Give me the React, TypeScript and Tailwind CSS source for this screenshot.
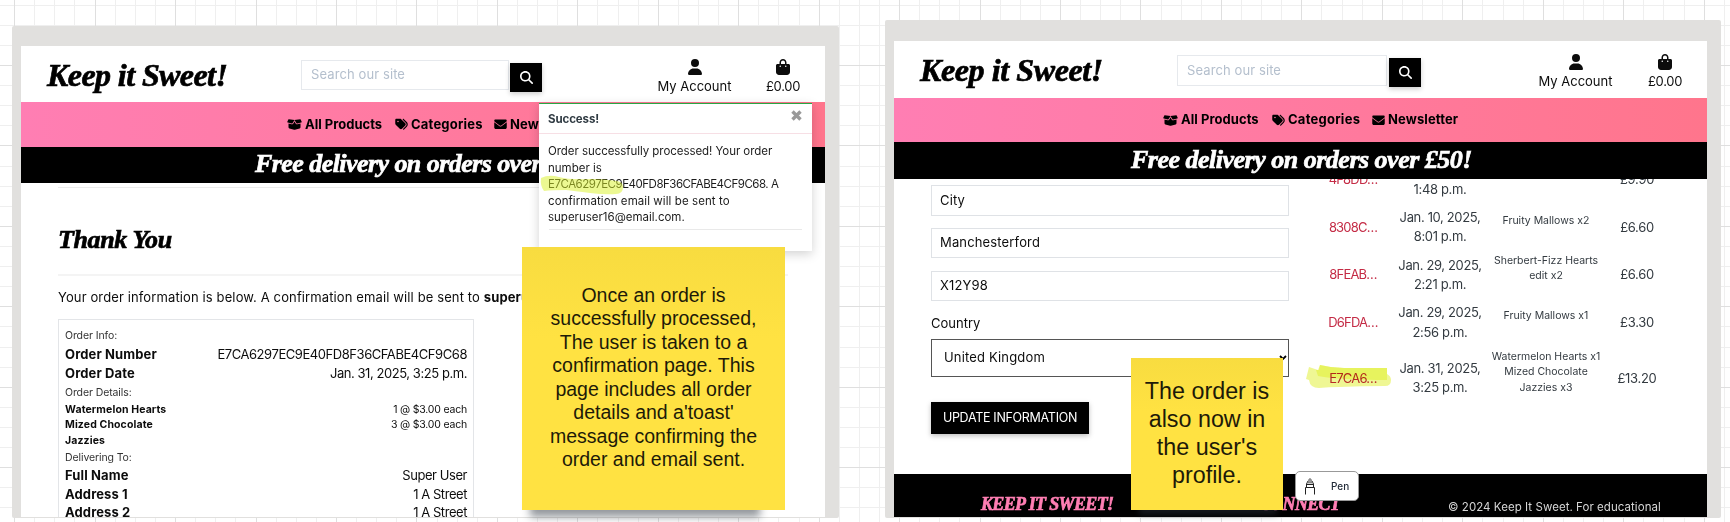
import type { ReactNode } from "react";
import {
  FaBagShopping,
  FaBoxOpen,
  FaEnvelope,
  FaMagnifyingGlass,
  FaTags,
  FaUser,
} from "react-icons/fa6";

const script = "font-['Liberation_Serif',serif] font-bold italic [-webkit-text-stroke:0.7px]";

function CanvasGrid() {
  const step = 20.113;
  const cols = Array.from({ length: 87 }, (_, i) => i - 1);
  const rows = Array.from({ length: 26 }, (_, i) => i);
  const ink = (i: number) => (i % 4 === 0 ? "#dfdfdf" : "#efefef");
  return (
    <svg className="absolute inset-0" width="1730" height="522" shapeRendering="crispEdges">
      {cols.map((i) => i % 4 !== 0 && <rect key={"c" + i} x={Math.round(14.15 + i * step)} y="0" width="1" height="522" fill={ink(i)} />)}
      {rows.map((i) => <rect key={"r" + i} x="0" y={Math.floor(5.1 + i * step)} width="1730" height="1" fill={ink(i + 1)} />)}
      {cols.map((i) => i % 4 === 0 && <rect key={"m" + i} x={Math.round(14.15 + i * step)} y="0" width="1" height="522" fill={ink(i)} />)}
    </svg>
  );
}

function SiteHeader({ wide = false }: { wide?: boolean }) {
  return (
    <div className="shrink-0">
      <header className={wide ? "flex h-[57px] items-start bg-white" : "flex h-14 items-start bg-white"}>
        <div className={`${script} ml-[26px] mt-[10px] w-[254px] whitespace-nowrap text-[32px] leading-[38px] text-black ${wide ? "tracking-[-0.4px]" : "tracking-[-0.58px]"}`}>
          Keep it Sweet!
        </div>
        <div className={wide ? "ml-[3px] mt-[14px] flex h-[31px] w-[210px] items-center border border-[#e6e9ed] pl-[9px]" : "mt-[14px] flex h-[30px] w-[208px] items-center border border-[#e6e9ed] pl-[9px]"}>
          <span className="text-[13px] tracking-[0.1px] text-[#b4bfcd]">Search our site</span>
        </div>
        <div className={`flex h-[29px] w-8 items-center justify-center bg-black text-white shadow-[0_2px_5px_rgba(0,0,0,0.2)] ${wide ? "ml-[2px] mt-[17px]" : "ml-px mt-[17px]"}`}>
          <FaMagnifyingGlass size={13} />
        </div>
        <div className={wide ? "ml-[112px] mt-[13px] flex w-[85px] flex-col items-center" : "ml-[110px] mt-[13px] flex w-[85px] flex-col items-center"}>
          <FaUser size={16} />
          <span className="mt-[2px] text-[13px] leading-[18px]">My Account</span>
        </div>
        <div className={wide ? "ml-[22px] mt-[13px] flex w-[50px] flex-col items-center" : "ml-[21px] mt-[13px] flex w-[50px] flex-col items-center"}>
          <FaBagShopping size={16} />
          <span className="mt-[2px] text-[13px] leading-[18px] tracking-[-0.3px]">£0.00</span>
        </div>
      </header>
      <nav className={`flex items-center bg-linear-to-r from-[#ff7eb3] to-[#ff758c] text-[13px] font-bold text-black ${wide ? "h-11 pl-[269px]" : "h-[45px] pl-[266px]"}`}>
        <span className={`flex items-center gap-[3px] ${wide ? "w-[109px] tracking-[0.05px]" : "w-[108px]"}`}>
          <FaBoxOpen size={15} className="w-[15px]" />
          All Products
        </span>
        <span className={`flex items-center gap-[3px] ${wide ? "w-[100px] tracking-[0.25px]" : "w-[99px] tracking-[0.2px]"}`}>
          <FaTags size={12.5} className="w-[13px]" />
          Categories
        </span>
        <span className="flex items-center gap-[3px] tracking-[0.12px]">
          <FaEnvelope size={12.5} className="w-[13px]" />
          Newsletter
        </span>
      </nav>
      <div className={`${script} flex items-center whitespace-nowrap bg-black pb-[2px] text-[26px] leading-none text-white ${wide ? "h-[37px] pl-[237px] tracking-[-0.5px]" : "h-9 pl-[234px] tracking-[-0.56px]"}`}>
        Free delivery on orders over £50!
      </div>
    </div>
  );
}

function Pair({ label, value, small = false, className }: { label: string; value?: string; small?: boolean; className: string }) {
  return (
    <div className={`flex shrink-0 items-center justify-between whitespace-nowrap ${small ? "text-[10.5px]" : "text-[13px]"} ${className}`}>
      <span className="font-bold tracking-[0.12px]">{label}</span>
      <span className={small ? "tracking-[-0.2px]" : "tracking-[-0.44px]"}>{value}</span>
    </div>
  );
}

function Caption({ children, className }: { children: ReactNode; className: string }) {
  return <div className={`flex shrink-0 items-center text-[10.5px] tracking-[-0.1px] text-[#333] ${className}`}>{children}</div>;
}

function ConfirmationPage() {
  return (
    <div className="absolute left-3 top-[26px] h-[492px] w-[827px] rounded-xs bg-[#e1e0de] pb-[1.5px] pl-[9px] pr-[14px] pt-5">
      <div className="flex h-full flex-col overflow-hidden bg-white">
        <SiteHeader />
        <div className="flex min-h-0 flex-1 flex-col pl-[37px] pr-[37px]">
          <div className="mt-1 h-px shrink-0 bg-[#ebebeb]" />
          <div className={`${script} mt-[37px] h-[32px] shrink-0 text-[26px] leading-[30px] tracking-[-0.4px] text-black`}>Thank You</div>
          <div className="mt-[17px] h-[2px] shrink-0 bg-[#f4f4f4]" />
          <p className="mt-[11px] h-[20px] shrink-0 whitespace-nowrap text-[13px] leading-[20px] tracking-[0.12px]">
            Your order information is below. A confirmation email will be sent to{" "}
            <b>superuser16@email.com</b>.
          </p>
          <div className="mt-3 flex min-h-0 w-[416px] flex-1 flex-col overflow-hidden border border-b-0 border-[#e3e5e8] px-[6px] pt-[6px]">
            <Caption className="h-5">Order Info:</Caption>
            <Pair className="h-[18px]" label="Order Number" value="E7CA6297EC9E40FD8F36CFABE4CF9C68" />
            <Pair className="h-[19px]" label="Order Date" value="Jan. 31, 2025, 3:25 p.m." />
            <Caption className="h-[20px]">Order Details:</Caption>
            <Pair small className="h-[14px]" label="Watermelon Hearts" value="1 @ $3.00 each" />
            <Pair small className="h-[16px]" label="Mized Chocolate" value="3 @ $3.00 each" />
            <Pair small className="h-[15px]" label="Jazzies" />
            <Caption className="h-[19px]">Delivering To:</Caption>
            <Pair className="h-[18px]" label="Full Name" value="Super User" />
            <Pair className="h-[19px]" label="Address 1" value="1 A Street" />
            <Pair className="h-[18px]" label="Address 2" value="1 A Street" />
          </div>
        </div>
      </div>
      <Toast />
    </div>
  );
}

function Toast() {
  return (
    <div className="absolute left-[527px] top-[77px] h-[148px] w-[273px] border-t border-[#28a745] bg-white shadow-[0_3px_10px_rgba(0,0,0,0.18)]">
      <div className="flex h-[30px] items-start justify-between border-b border-[#f7dfe5] pl-[9px] pr-[10px]">
        <span className="mt-[7px] text-[11.5px] font-bold leading-4 tracking-[-0.1px] text-[#2f3a42]">Success!</span>
        <svg className="mt-[6px]" width="11" height="11" viewBox="0 0 11 11" stroke="#999" strokeWidth="3.4">
          <path d="M1.500 1.500l8 8M9.500 1.500l-8 8" />
        </svg>
      </div>
      <div className="mx-[10px] -ml-0 whitespace-nowrap pl-[9px] pt-[9px] text-[11.5px] leading-[16.6px] text-[#1c1c1c]">
        <div className="tracking-[-0.06px]">Order successfully processed! Your order</div>
        <div>number is</div>
        <div className="tracking-[-0.49px]">E7CA6297EC9E40FD8F36CFABE4CF9C68. A</div>
        <div className="tracking-[0.08px]">confirmation email will be sent to</div>
        <div>superuser16@email.com.</div>
      </div>
      <div className="mx-[10px] mt-[3px] h-px bg-[#e9e9e9]" />
      <svg className="absolute left-0 top-[70px]" width="90" height="22" viewBox="0 0 90 22" fill="#d9f226" fillOpacity="0.5">
        <path d="M2 4q8-4 18-1t32 2q14 0 26 2q6 1 6 6q0 7-7 7q-10 1-26-1t-24-3q-14 0-22 1q-4-5-3-13z" />
      </svg>
    </div>
  );
}

function Field({ children, className = "" }: { children: ReactNode; className?: string }) {
  return <div className={`flex shrink-0 items-center border border-[#dfe2e6] pl-2 text-[13px] tracking-[0.15px] ${className}`}>{children}</div>;
}

const orders = [
  { id: "4F8DD…", date: "Jan. 10, 2025,", time: "1:48 p.m.", items: ["Fruity Mallows x3"], total: "£9.90" },
  { id: "8308C…", date: "Jan. 10, 2025,", time: "8:01 p.m.", items: ["Fruity Mallows x2"], total: "£6.60" },
  { id: "8FEAB…", date: "Jan. 29, 2025,", time: "2:21 p.m.", items: ["Sherbert-Fizz Hearts", "edit x2"], total: "£6.60" },
  { id: "D6FDA…", date: "Jan. 29, 2025,", time: "2:56 p.m.", items: ["Fruity Mallows x1"], total: "£3.30" },
  { id: "E7CA6…", date: "Jan. 31, 2025,", time: "3:25 p.m.", items: ["Watermelon Hearts x1", "Mized Chocolate", "Jazzies x3"], total: "£13.20" },
];

function ProfilePage() {
  return (
    <div className="absolute left-[885px] top-5 h-[498px] w-[836px] rounded-xs bg-[#e1e0de] pb-[1.5px] pl-[9px] pr-[14px] pt-[21px]">
      <div className="flex h-full flex-col overflow-hidden bg-white">
        <SiteHeader wide />
        <div className="flex h-[295px] shrink-0 overflow-hidden pl-[37px]">
          <div className="flex w-[358px] flex-col pt-[6px]">
            <Field className="h-[31px]">City</Field>
            <Field className="mt-3 h-[30px]">Manchesterford</Field>
            <Field className="mt-[13px] h-[30px]">X12Y98</Field>
            <div className="mt-[13px] h-[18px] text-[13px] leading-[18px]">Country</div>
            <div className="mt-[7px] flex h-[38px] shrink-0 items-center justify-between border border-[#555] pl-3 pr-[1px] text-[13px] tracking-[0.16px]">
              United Kingdom
              <svg width="8" height="6" viewBox="0 0 8 6" fill="none" stroke="#000" strokeWidth="1.8">
                <path d="M1 1l3 3 3-3" />
              </svg>
            </div>
            <div className="mt-[25px] flex h-8 w-[158px] items-center justify-center whitespace-nowrap bg-black text-[12.5px] tracking-[-0.3px] text-white shadow-[0_2px_5px_rgba(0,0,0,0.25)]">
              UPDATE INFORMATION
            </div>
          </div>
          <div className="-mt-[23px] ml-[19px] flex flex-col text-center text-[#333a40]">
            {orders.map((o, i) => (
              <div key={o.id} className={`flex shrink-0 items-center whitespace-nowrap text-[13px] ${i === 4 ? "h-[64px]" : "h-[47.6px]"}`}>
                <div className="w-[90px] tracking-[-0.8px] text-[#c42b45]">{o.id}</div>
                <div className="w-[84px] leading-[19.2px] tracking-[-0.35px]">
                  <div>{o.date}</div>
                  <div>{o.time}</div>
                </div>
                <div className="w-[128px] pb-[13px] text-[10.5px] leading-[15.3px]">
                  {o.items.map((t) => <div key={t}>{t}</div>)}
                </div>
                <div className="w-[54px] tracking-[-0.3px]">{o.total}</div>
              </div>
            ))}
          </div>
        </div>
        <footer className="flex min-h-0 flex-1 overflow-hidden bg-black">
          <div className={`${script} ml-[87px] mt-[18px] w-[278px] whitespace-nowrap text-[18px] leading-[24px] tracking-[-0.64px] text-[#ff7eb3]`}>KEEP IT SWEET!</div>
          <div className={`${script} mt-[18px] w-[189px] whitespace-nowrap text-[18px] leading-[24px] tracking-[-0.7px] text-[#ff7eb3]`}>CONNECT</div>
          <div className="mt-6 whitespace-nowrap text-[11.5px] leading-[18px] tracking-[0.05px] text-[#d6d6d6]">© 2024 Keep It Sweet. For educational</div>
        </footer>
      </div>
      <svg className="absolute left-[420px] top-[342px] mix-blend-multiply" width="86" height="28" viewBox="0 0 86 28" fill="#dff02a">
        <path fillOpacity="0.5" d="M4 5l9 3 2-5q12 3 24 3h43v6q4 2 4 6 0 6-6 6-24 0-46 1-10 0-20 1-9 0-10-8l-3-1z" />
        <path fillOpacity="0.5" d="M15 3q12 3 24 3h43v12q-20 0-36-1-18 0-33-3l-2-6 3 0z" />
      </svg>
    </div>
  );
}

function StickyNote({ lines, className, shadow }: { lines: string[]; className: string; shadow: string }) {
  return (
    <div className={`absolute ${className}`}>
      <div className={`absolute bottom-0 left-2 h-10 ${shadow}`} />
      <div className="relative flex h-full w-full flex-col items-center justify-center whitespace-nowrap bg-linear-to-b from-[#f8dc40] to-[#ffe242] to-35% pb-[2px] text-[#1d1a08]">
        {lines.map((l) => <div key={l}>{l}</div>)}
      </div>
    </div>
  );
}

function PenLabel() {
  return (
    <div className="absolute left-[1295px] top-[471px] flex h-[30px] w-16 items-center rounded-[5px] border border-[#999] bg-white">
      <svg className="ml-[8px]" width="12" height="18" viewBox="0 0 12 18" fill="none" stroke="#222" strokeWidth="1">
        <path d="M1.500 17.500v-7h9v7M2.500 10.500V7L4 4M9.500 10.500V7L8 4M2.500 7.500h7" />
        <path d="M3.500 6L5 2q1-1 2 0l1.500 4z" fill="#999" stroke="#666" strokeWidth="0.6" />
      </svg>
      <span className="ml-[15px] text-[10px] font-medium text-[#222b38]">Pen</span>
    </div>
  );
}

export default function App() {
  return (
    <div className="relative h-[522px] w-[1730px] overflow-hidden bg-white font-['Inter',sans-serif] text-[#0c0c0c]">
      <CanvasGrid />
      <ConfirmationPage />
      <ProfilePage />
      <StickyNote
        className="left-[522px] top-[247px] h-[263px] w-[263px] font-['Liberation_Sans',sans-serif] text-[19.5px] leading-[23.5px]"
        shadow="w-[230px] shadow-[0_7px_8px_rgba(20,28,40,0.45)]"
        lines={["Once an order is", "successfully processed,", "The user is taken to a", "confirmation page. This", "page includes all order", "details and a'toast'", "message confirming the", "order and email sent."]}
      />
      <StickyNote
        className="left-[1131px] top-[358px] h-[152px] w-[152px] font-['Liberation_Sans',sans-serif] text-[23.3px] leading-[28.2px]"
        shadow="w-[138px] shadow-[0_5px_6px_rgba(40,45,55,0.5)]"
        lines={["The order is", "also now in", "the user's", "profile."]}
      />
      <PenLabel />
    </div>
  );
}
